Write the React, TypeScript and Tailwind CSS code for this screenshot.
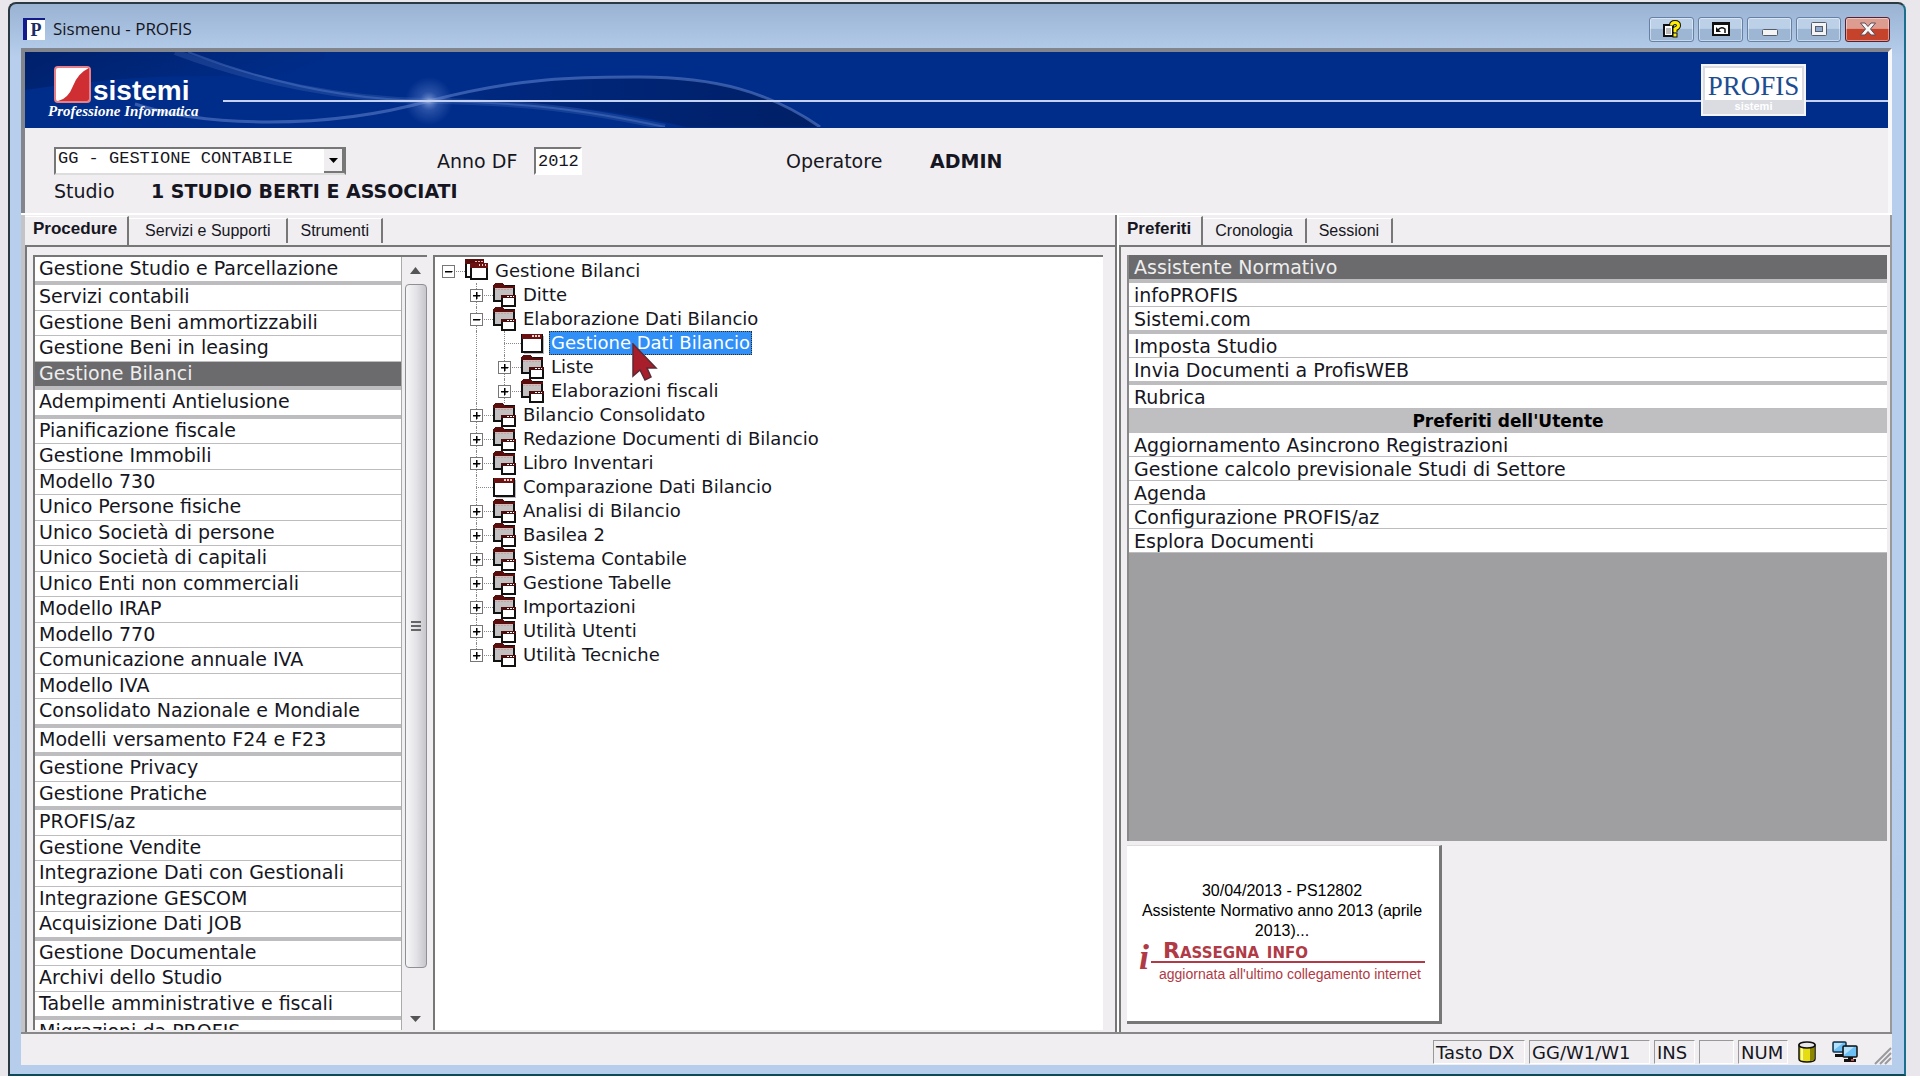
import { useState } from 'react';
import type { ReactNode } from 'react';

interface ListRow {
  label: string;
  groupEnd?: boolean;
}

interface TreeNode {
  label: string;
  depth: number;
  kind: 'root' | 'folder' | 'leaf';
  open?: boolean;
}

const procedures: ListRow[] = [
  { label: 'Gestione Studio e Parcellazione', groupEnd: true },
  { label: 'Servizi contabili' },
  { label: 'Gestione Beni ammortizzabili' },
  { label: 'Gestione Beni in leasing' },
  { label: 'Gestione Bilanci', groupEnd: true },
  { label: 'Adempimenti Antielusione', groupEnd: true },
  { label: 'Pianificazione fiscale' },
  { label: 'Gestione Immobili' },
  { label: 'Modello 730' },
  { label: 'Unico Persone fisiche' },
  { label: 'Unico Società di persone' },
  { label: 'Unico Società di capitali' },
  { label: 'Unico Enti non commerciali' },
  { label: 'Modello IRAP' },
  { label: 'Modello 770' },
  { label: 'Comunicazione annuale IVA' },
  { label: 'Modello IVA' },
  { label: 'Consolidato Nazionale e Mondiale', groupEnd: true },
  { label: 'Modelli versamento F24 e F23', groupEnd: true },
  { label: 'Gestione Privacy' },
  { label: 'Gestione Pratiche', groupEnd: true },
  { label: 'PROFIS/az' },
  { label: 'Gestione Vendite' },
  { label: 'Integrazione Dati con Gestionali' },
  { label: 'Integrazione GESCOM' },
  { label: 'Acquisizione Dati JOB', groupEnd: true },
  { label: 'Gestione Documentale' },
  { label: 'Archivi dello Studio' },
  { label: 'Tabelle amministrative e fiscali', groupEnd: true },
  { label: 'Migrazioni da PROFIS' },
];

const tree: TreeNode[] = [
  { label: 'Gestione Bilanci', depth: 0, kind: 'root', open: true },
  { label: 'Ditte', depth: 1, kind: 'folder' },
  { label: 'Elaborazione Dati Bilancio', depth: 1, kind: 'folder', open: true },
  { label: 'Gestione Dati Bilancio', depth: 2, kind: 'leaf' },
  { label: 'Liste', depth: 2, kind: 'folder' },
  { label: 'Elaborazioni fiscali', depth: 2, kind: 'folder' },
  { label: 'Bilancio Consolidato', depth: 1, kind: 'folder' },
  { label: 'Redazione Documenti di Bilancio', depth: 1, kind: 'folder' },
  { label: 'Libro Inventari', depth: 1, kind: 'folder' },
  { label: 'Comparazione Dati Bilancio', depth: 1, kind: 'leaf' },
  { label: 'Analisi di Bilancio', depth: 1, kind: 'folder' },
  { label: 'Basilea 2', depth: 1, kind: 'folder' },
  { label: 'Sistema Contabile', depth: 1, kind: 'folder' },
  { label: 'Gestione Tabelle', depth: 1, kind: 'folder' },
  { label: 'Importazioni', depth: 1, kind: 'folder' },
  { label: 'Utilità Utenti', depth: 1, kind: 'folder' },
  { label: 'Utilità Tecniche', depth: 1, kind: 'folder' },
];

const favourites: ListRow[] = [
  { label: 'Assistente Normativo', groupEnd: true },
  { label: 'infoPROFIS' },
  { label: 'Sistemi.com', groupEnd: true },
  { label: 'Imposta Studio' },
  { label: 'Invia Documenti a ProfisWEB', groupEnd: true },
  { label: 'Rubrica' },
];

const userFavourites = [
  'Aggiornamento Asincrono Registrazioni',
  'Gestione calcolo previsionale Studi di Settore',
  'Agenda',
  'Configurazione PROFIS/az',
  'Esplora Documenti',
];

/* ── Icons ─────────────────────────────────────────────────── */

function RootIcon() {
  return (
    <svg width="24" height="24" viewBox="0 0 24 24" shapeRendering="crispEdges">
      <rect x="1" y="1" width="17" height="17" fill="#fff" stroke="#111" strokeWidth="2" />
      <rect x="0" y="0" width="19" height="5" fill="#5a0d0d" />
      <path d="M10 2h2M13 2h2M16 2h2" stroke="#e9b4b4" strokeWidth="1" />
      <rect x="6" y="5" width="16" height="15" fill="#fff" stroke="#111" strokeWidth="2" />
      <rect x="5" y="4" width="18" height="5" fill="#6b1212" />
      <path d="M14 6h1M17 6h1M20 6h1" stroke="#f3c6c6" strokeWidth="2" />
    </svg>
  );
}

function FolderIcon() {
  return (
    <svg width="24" height="24" viewBox="0 0 24 24" shapeRendering="crispEdges">
      <rect x="1" y="3" width="20" height="15" fill="#c2c0c0" stroke="#111" strokeWidth="2" />
      <path d="M2 0h8l2 3h10v2H0V2z" fill="#5a0d0d" />
      <path d="M2 6h17" stroke="#d99" strokeDasharray="2 1" />
      <rect x="9" y="13" width="13" height="10" fill="#fff" stroke="#111" strokeWidth="2" />
      <rect x="8" y="12" width="15" height="3" fill="#4a0c0c" />
      <path d="M14 13h2M17 13h2M20 13h1" stroke="#fff" />
    </svg>
  );
}

function WindowIcon() {
  return (
    <svg width="24" height="24" viewBox="0 0 24 24" shapeRendering="crispEdges">
      <path d="M22 5v17H3" fill="none" stroke="#bbb" />
      <rect x="1" y="4" width="20" height="17" fill="#fff" stroke="#111" strokeWidth="2" />
      <rect x="1" y="3" width="20" height="5" fill="#6b1212" />
      <path d="M11 5h2M14 5h2M17 5h2" stroke="#f3d0d0" strokeWidth="2" />
    </svg>
  );
}

function HelpIcon() {
  return (
    <svg width="20" height="18" viewBox="0 0 20 18">
      <path d="M2 5h9v11H2z" fill="#fff" stroke="#111" strokeWidth="2" />
      <path d="M4 9h5M4 11h5M4 13h5" stroke="#777" />
      <path d="M9.500 5.500Q9.500 2.500 13 2.500T16.500 5.500Q16.500 7.500 13 9v3" fill="none" stroke="#111" strokeWidth="5" />
      <path d="M9.500 5.500Q9.500 2.500 13 2.500T16.500 5.500Q16.500 7.500 13 9v3" fill="none" stroke="#ffee00" strokeWidth="3" />
      <rect x="11" y="13" width="4" height="4" fill="#ffee00" stroke="#111" />
    </svg>
  );
}

function UndoWindowIcon() {
  return (
    <svg width="18" height="14" viewBox="0 0 18 14">
      <rect x="1" y="1" width="16" height="12" fill="#fff" stroke="#111" strokeWidth="2" />
      <rect x="1" y="1" width="16" height="2" fill="#111" />
      <path d="M4 5v5h5z" fill="#111" />
      <path d="M6 8q3-4 7-1v4" fill="none" stroke="#111" strokeWidth="1.500" />
    </svg>
  );
}

function MinimizeIcon() {
  return (
    <svg width="18" height="18" viewBox="0 0 18 18">
      <rect x="1.500" y="9.500" width="15" height="6" rx="1" fill="#f4f4f4" stroke="#555d6b" />
    </svg>
  );
}

function MaximizeIcon() {
  return (
    <svg width="16" height="14" viewBox="0 0 16 14">
      <rect x="0.500" y="0.500" width="15" height="13" rx="1" fill="#f4f4f4" stroke="#555d6b" />
      <rect x="4.500" y="4.500" width="7" height="5" fill="#8faad0" stroke="#555d6b" />
    </svg>
  );
}

function CloseIcon() {
  return (
    <svg width="18" height="14" viewBox="0 0 18 14">
      <path
        d="M1.500 1h4.500l3 3.500 3-3.500h4.500l-5 6 5 6h-4.500l-3-3.500-3 3.500H1.500l5-6z"
        fill="#f6f6f6"
        stroke="#5b4a55"
      />
    </svg>
  );
}

function DatabaseIcon() {
  return (
    <svg width="18" height="22" viewBox="0 0 18 22">
      <path d="M1 4v14q0 3 8 3t8-3V4z" fill="#e6dc12" stroke="#111" strokeWidth="1.500" />
      <path d="M12 6v14q4-.500 4.500-2V5z" fill="#8d8700" />
      <path d="M4 7v12" stroke="#fffbb0" strokeWidth="2" />
      <ellipse cx="9" cy="4" rx="8" ry="3" fill="#e9e9e9" stroke="#111" strokeWidth="1.500" />
    </svg>
  );
}

function NetworkIcon() {
  return (
    <svg width="26" height="22" viewBox="0 0 26 22">
      <rect x="1" y="1" width="13" height="10" rx="1" fill="#6cc0f5" stroke="#16324a" strokeWidth="1.500" />
      <path d="M2 9l9-7H2z" fill="#b4e2fd" />
      <path d="M3 13h8v3H3z" fill="#111" />
      <rect x="11" y="5" width="14" height="11" rx="1" fill="#6cc0f5" stroke="#111" strokeWidth="1.500" />
      <path d="M12 14l10-8H12z" fill="#b4e2fd" />
      <path d="M16 16h5v2h3v3H12v-3h4z" fill="#111" />
      <path d="M19 19h3" stroke="#f66" strokeWidth="1.500" />
    </svg>
  );
}

function Pointer() {
  return (
    <svg className="pointer-events-none absolute left-[82px] top-3 z-10" width="28" height="38" viewBox="0 0 28 38">
      <path d="M2 1v32l7-6 5 10 6-3-4-9h9z" fill="#a81f2b" stroke="#5c2a35" strokeWidth="1.500" />
    </svg>
  );
}

function BannerArt() {
  return (
    <svg className="absolute left-0 top-0" width="900" height="75" viewBox="0 0 900 75">
      <defs>
        <radialGradient id="glow">
          <stop offset="0" stopColor="#b9cdf5" stopOpacity="0.700" />
          <stop offset="0.400" stopColor="#6f8fd6" stopOpacity="0.350" />
          <stop offset="1" stopColor="#6f8fd6" stopOpacity="0" />
        </radialGradient>
        <linearGradient id="corner" x1="0" y1="0" x2="1" y2="0.300">
          <stop offset="0" stopColor="#001a5c" stopOpacity="0.700" />
          <stop offset="1" stopColor="#001a5c" stopOpacity="0" />
        </linearGradient>
        <linearGradient id="lens" x1="0" y1="0" x2="1" y2="0">
          <stop offset="0" stopColor="#002a84" />
          <stop offset="1" stopColor="#001f66" />
        </linearGradient>
      </defs>
      <path d="M0 0h300v30q-150-15-300 8z" fill="url(#corner)" />
      <path d="M404 49C500 28 560 25 615 25C690 25 745 40 795 75H660C570 52 500 52 404 49z" fill="url(#lens)" />
      <path d="M150 0C230 30 320 48 404 49C500 50 560 58 640 75" fill="none" stroke="#6b8bd4" strokeOpacity="0.200" strokeWidth="6" />
      <path d="M163 0C240 30 320 48 404 49C500 50 560 58 640 75" fill="none" stroke="#6b8bd4" strokeOpacity="0.350" strokeWidth="2" />
      <path d="M110 52C180 75 300 78 404 49C500 24 560 25 615 25C690 25 745 40 795 75" fill="none" stroke="#6b8bd4" strokeOpacity="0.500" strokeWidth="3" />
      <circle cx="404" cy="49" r="24" fill="url(#glow)" />
    </svg>
  );
}

/* ── Small controls ────────────────────────────────────────── */

function TitleButton({ label, danger, children }: { label: string; danger?: boolean; children: ReactNode }) {
  return (
    <button
      aria-label={label}
      className={`flex h-[25px] w-[45px] items-center justify-center rounded-[3px] border shadow-[inset_0_0_0_1px_rgba(255,255,255,0.45)] ${
        danger
          ? 'border-[#5a2030] bg-linear-to-b from-[#dd9c90] from-45% to-[#c4432a] to-50%'
          : 'border-[#6681a6] bg-linear-to-b from-[#bcd0e8] from-45% to-[#9db6d4] to-50%'
      }`}
    >
      {children}
    </button>
  );
}

function Tabs({ names }: { names: string[] }) {
  return (
    <div role="tablist" className="flex h-8 items-end border-b-2 border-[#777] text-base">
      {names.map((name, i) =>
        i === 0 ? (
          <button
            key={name}
            role="tab"
            aria-selected="true"
            className="h-[29px] border-r-2 border-t border-r-[#777] border-t-white pb-1 pl-2 pr-2.5 text-[17px] font-bold leading-6"
          >
            {name}
          </button>
        ) : (
          <button
            key={name}
            role="tab"
            aria-selected="false"
            className={`mb-0.5 h-[25px] border-r-2 border-t border-r-[#777] border-t-white leading-6 ${
              name.length > 12 ? 'px-4' : 'px-3'
            }`}
          >
            {name}
          </button>
        )
      )}
    </div>
  );
}

function Toggle({ open }: { open?: boolean }) {
  return (
    <svg className="relative" width="13" height="13" viewBox="0 0 13 13" shapeRendering="crispEdges">
      <rect x="0.500" y="0.500" width="12" height="12" fill="#fff" stroke="#777" />
      <path d={open ? 'M3 6h7v1H3z' : 'M3 6h7v1H3zM6 3h1v7H6z'} fill="#000" stroke="#000" strokeWidth="0.500" />
    </svg>
  );
}

function TreeRow({
  node,
  last,
  selected,
  onSelect,
}: {
  node: TreeNode;
  last: boolean;
  selected: boolean;
  onSelect: () => void;
}) {
  return (
    <li className="flex h-6 items-center">
      {Array.from({ length: node.depth }).map((_, i) => (
        <span key={i} className="relative h-6 w-7">
          {i > 0 && <span className="absolute left-1.5 h-6 border-l border-dotted border-[#888]" />}
        </span>
      ))}
      <span className="relative flex h-6 w-[23px] items-center">
        {node.depth > 0 && (
          <span
            className={`absolute left-1.5 top-0 border-l border-dotted border-[#888] ${last ? 'h-3' : 'h-6'}`}
          />
        )}
        <span className="absolute left-1.5 right-0 top-3 border-t border-dotted border-[#888]" />
        {node.kind !== 'leaf' && <Toggle open={node.open} />}
      </span>
      {node.kind === 'root' && <RootIcon />}
      {node.kind === 'folder' && <FolderIcon />}
      {node.kind === 'leaf' && <WindowIcon />}
      <span className="relative ml-1">
        <button
          onClick={onSelect}
          className={`h-6 px-0.5 text-[18px] leading-6 ${
            selected ? 'bg-[#3090f8] text-white outline-1 -outline-offset-1 outline-dotted outline-[#3a2a10]' : ''
          }`}
        >
          {node.label}
        </button>
        {node.label === 'Gestione Dati Bilancio' && <Pointer />}
      </span>
    </li>
  );
}

function StatusPane({ className, children }: { className: string; children?: ReactNode }) {
  return (
    <span className={`h-6 border border-b-white border-l-[#999] border-r-white border-t-[#999] pl-0.5 leading-6 ${className}`}>
      {children}
    </span>
  );
}

export default function App() {
  const [procedure, setProcedure] = useState('Gestione Bilanci');
  const [node, setNode] = useState('Gestione Dati Bilancio');
  const [year, setYear] = useState('2012');

  return (
    <div className="h-screen border-b-4 border-white bg-[#e9e7eb] pl-2 pr-3.5 pt-0.5 font-['DejaVu_Sans',sans-serif] text-[#161622]">
      <div className="flex h-full flex-col rounded-t-lg border-2 border-[#2b3a40] border-b-[#0c4a58] border-r-[#1b6e8c] bg-linear-to-b from-[#9ab3d3] via-[#b7cfec] via-5% to-[#b7cdec] pb-[9px] pl-[11px] pr-3">
        {/* Title bar */}
        <header className="flex h-11 shrink-0 items-center justify-between pl-0.5 pt-1.5">
          <div className="flex items-center gap-2">
            <span className="flex h-[22px] w-[22px] items-center justify-center border-l-4 border-t-2 border-[#141c8c] bg-white font-['Liberation_Serif',serif] text-lg font-bold leading-5 text-[#1a2c66]">
              P
            </span>
            <h1 className="font-['Open_Sans',sans-serif] text-[17px] leading-6">Sismenu - PROFIS</h1>
          </div>
          <div className="flex gap-1 pr-0.5">
            <TitleButton label="Guida"><HelpIcon /></TitleButton>
            <TitleButton label="Ripristina"><UndoWindowIcon /></TitleButton>
            <TitleButton label="Riduci a icona"><MinimizeIcon /></TitleButton>
            <TitleButton label="Ingrandisci"><MaximizeIcon /></TitleButton>
            <TitleButton label="Chiudi" danger><CloseIcon /></TitleButton>
          </div>
        </header>

        <div className="flex min-h-0 flex-1 flex-col bg-[#f0eef1]">
          <div className="border-l-4 border-r-4 border-t-4 border-l-[#83858c] border-r-[#f8f8fa] border-t-[#83858c]">
            {/* Banner */}
            <div className="relative flex h-[76px] items-start justify-between overflow-hidden bg-[#002d8a]">
              <BannerArt />
              <div className="absolute left-[198px] right-0 top-12 h-0.5 bg-[#c5d2f0]" />
              <div className="relative pl-[23px] pt-3.5 text-white">
                <div className="flex items-end gap-0.5 pl-1.5">
                  <svg width="37" height="37" viewBox="0 0 37 37">
                    <rect x="1" y="1" width="35" height="35" rx="3" fill="#fff" stroke="#e58088" strokeWidth="2" />
                    <path d="M35 2v31q0 2-2 2H4Q14 33 19 20T35 2z" fill="#cf2f33" />
                  </svg>
                  <span className="font-['Liberation_Sans',sans-serif] text-[28px] font-bold leading-6">sistemi</span>
                </div>
                <p className="font-['Liberation_Serif',serif] text-[15px] font-bold italic leading-4">
                  Professione Informatica
                </p>
              </div>
              <div className="relative mr-[82px] mt-3 flex h-[52px] w-[105px] flex-col items-center border-2 border-[#f4f5fa] bg-[#dadce2] px-0.5 pt-0.5">
                <span className="h-8 w-full bg-white text-center font-['Liberation_Serif',serif] text-[27px] leading-9 text-[#1c4d92]">
                  PROFIS
                </span>
                <span className="font-['Liberation_Sans',sans-serif] text-[11px] font-bold leading-3 text-white">
                  sistemi
                </span>
              </div>
            </div>

            {/* Context */}
            <div className="h-[85px] pl-[29px] pt-[19px] text-[19px]">
              <div className="flex h-7 items-center">
                <div className="relative h-7 w-[292px] border-2 border-b-[#ddd] border-l-[#777] border-r-[#777] border-t-[#777] bg-white">
                  <select
                    aria-label="Procedura"
                    className="block h-5 w-full appearance-none bg-white pl-0.5 font-['Liberation_Mono',monospace] text-[17px] leading-5 outline-none"
                  >
                    <option>GG - GESTIONE CONTABILE</option>
                  </select>
                  <span className="pointer-events-none absolute right-0 top-0 flex h-6 w-5 items-center justify-center border-b-2 border-r-2 border-[#777] bg-[#f0eef1]">
                    <svg width="9" height="5" viewBox="0 0 9 5"><path d="M0 0h9L4.500 5z" /></svg>
                  </span>
                </div>
                <label htmlFor="anno" className="ml-[91px] w-[97px]">Anno DF</label>
                <input
                  id="anno"
                  value={year}
                  onChange={(e) => setYear(e.target.value)}
                  className="h-7 w-12 border-2 border-b-white border-l-[#777] border-r-white border-t-[#777] bg-white pl-0.5 font-['Liberation_Mono',monospace] text-[17px] outline-none"
                />
                <span className="ml-[204px] w-36">Operatore</span>
                <strong>ADMIN</strong>
              </div>
              <div className="mt-0.5 flex h-7 items-center">
                <span className="w-[97px]">Studio</span>
                <strong>1 STUDIO BERTI E ASSOCIATI</strong>
              </div>
            </div>
          </div>

          {/* Panels */}
          <main className="flex min-h-0 flex-1 border-b-2 border-t-2 border-b-[#888] border-t-white">
            <section className="flex min-w-0 flex-1 flex-col border-l-4 border-r-2 border-l-[#c4c3c8] border-r-[#777]">
              <div className="font-['Liberation_Sans',sans-serif]">
                <Tabs names={['Procedure', 'Servizi e Supporti', 'Strumenti']} />
              </div>
              <div className="flex min-h-0 flex-1 gap-1.5 border-l-2 border-[#777] pb-0.5 pl-1.5 pr-3 pt-2">
                <div className="flex w-[394px] border-l-2 border-t-2 border-[#777] bg-[#f0eef1]">
                  <ul className="min-w-0 flex-1 overflow-hidden bg-white text-[19px]">
                    {procedures.map((row) => (
                      <li
                        key={row.label}
                        className={`box-content border-[#bdbcbf] odd:h-6 even:h-[25px] ${row.groupEnd ? 'border-b-4' : 'border-b'}`}
                      >
                        <button
                          onClick={() => setProcedure(row.label)}
                          className={`flex h-full w-full items-start pl-1 text-left leading-[22px] ${
                            row.label === procedure ? 'bg-[#6b6a6d] text-[#eeeeee]' : ''
                          }`}
                        >
                          {row.label}
                        </button>
                      </li>
                    ))}
                  </ul>
                  <div className="flex w-[26px] flex-col items-center border-l border-[#aaa] pl-0.5">
                    <svg className="my-2.5 shrink-0" width="11" height="7" viewBox="0 0 11 7"><path d="M0 7L5.500 0 11 7z" fill="#555" /></svg>
                    <div className="flex w-[22px] flex-1 flex-col items-center justify-center gap-0.5 rounded-sm border border-[#8f8f94] bg-linear-to-r from-[#f6f6f8] via-[#e4e4e8] to-[#c6c6cb]">
                      <span className="h-0.5 w-2.5 bg-[#666]" />
                      <span className="h-0.5 w-2.5 bg-[#666]" />
                      <span className="h-0.5 w-2.5 bg-[#666]" />
                    </div>
                    <svg className="mb-2 mt-12 shrink-0" width="11" height="6" viewBox="0 0 11 6"><path d="M0 0h11L5.500 6z" fill="#555" /></svg>
                  </div>
                </div>

                <ul className="min-w-0 flex-1 border-l-2 border-t-2 border-[#777] bg-white pl-[7px] pt-0.5">
                  {tree.map((n, i) => (
                    <TreeRow
                      key={n.label}
                      node={n}
                      last={i === tree.length - 1}
                      selected={n.label === node}
                      onSelect={() => setNode(n.label)}
                    />
                  ))}
                </ul>
              </div>
            </section>

            <section className="flex w-[775px] flex-col border-l-2 border-r-2 border-l-white border-r-[#999]">
              <div className="font-['Liberation_Sans',sans-serif]">
                <Tabs names={['Preferiti', 'Cronologia', 'Sessioni']} />
              </div>
              <div className="flex min-h-0 flex-1 flex-col border-l-2 border-[#777] pb-2 pl-1.5 pr-[3px] pt-2">
                <div className="min-h-0 flex-1 border-l-2 border-[#888] bg-[#9f9ea0] text-[19px]">
                  <ul>
                    {favourites.map((row, i) => (
                      <li
                        key={row.label}
                        className={`box-content border-[#bdbcbf] ${i === 0 ? 'h-6' : 'h-[23px]'} ${row.groupEnd ? 'border-b-4' : 'border-b'}`}
                      >
                        <button
                          className={`block h-full w-full pl-[5px] text-left leading-6 ${
                            i === 0 ? 'bg-[#6b6a6d] text-[#eeeeee]' : 'bg-white'
                          }`}
                        >
                          {row.label}
                        </button>
                      </li>
                    ))}
                  </ul>
                  <h2 className="h-6 bg-[#bfbec0] text-center text-[17px] font-bold leading-6 text-black">
                    Preferiti dell'Utente
                  </h2>
                  <ul>
                    {userFavourites.map((label) => (
                      <li key={label} className="h-6 border-b border-[#bdbcbf] bg-white">
                        <button className="block h-full w-full pl-[5px] text-left leading-6">{label}</button>
                      </li>
                    ))}
                  </ul>
                </div>

                {/* News card */}
                <div className="mt-1 h-[179px] w-[315px] shrink-0 border-b-[3px] border-r-[3px] border-t border-b-[#777] border-r-[#777] border-t-[#ddd] bg-white pl-3 pr-3.5 pt-[35px] font-['Liberation_Sans',sans-serif]">
                  <p className="text-center text-base leading-5 text-black">
                    30/04/2013 - PS12802
                    <br />
                    Assistente Normativo anno 2013 (aprile 2013)...
                  </p>
                  <div className="flex text-[#b03a45]">
                    <span className="w-3 font-['Liberation_Serif',serif] text-[36px] font-bold italic leading-8">i</span>
                    <div className="flex-1">
                      <p className="border-b-2 border-[#b03a45] pl-3 font-['DejaVu_Sans',sans-serif] text-[22px] font-bold leading-5 [font-variant:small-caps]">
                        Rassegna info
                      </p>
                      <p className="pl-2 text-sm leading-[22px]">aggiornata all'ultimo collegamento internet</p>
                    </div>
                  </div>
                </div>
              </div>
            </section>
          </main>

          {/* Status bar */}
          <footer className="flex h-[31px] shrink-0 items-center justify-end gap-1 pt-1 text-[18px]">
            <StatusPane className="w-[92px]">Tasto DX</StatusPane>
            <StatusPane className="w-[121px]">GG/W1/W1</StatusPane>
            <StatusPane className="w-[41px]">INS</StatusPane>
            <StatusPane className="w-[35px]" />
            <StatusPane className="w-[50px]">NUM</StatusPane>
            <span className="ml-1.5"><DatabaseIcon /></span>
            <span className="ml-3"><NetworkIcon /></span>
            <svg className="ml-3 self-end" width="18" height="18" viewBox="0 0 18 18">
              <path d="M1 17L17 1M6 17L17 6M11 17l6-6" stroke="#9a9a9e" strokeWidth="2" />
            </svg>
          </footer>
        </div>
      </div>
    </div>
  );
}
